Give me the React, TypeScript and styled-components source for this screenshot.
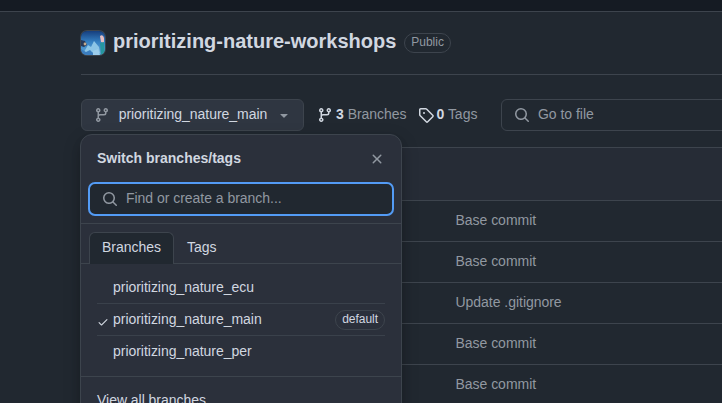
import React from "react";
import styled, { createGlobalStyle } from "styled-components";

const Global = createGlobalStyle`
  *, *::before, *::after { box-sizing: border-box; }
  body { margin: 0; background: #212830; overflow: hidden; }
  button, input { font: inherit; letter-spacing: inherit; }
`;

const paths = {
  branch:
    "M9.5 3.25a2.25 2.25 0 1 1 3 2.122V6A2.5 2.5 0 0 1 10 8.5H6a1 1 0 0 0-1 1v1.128a2.251 2.251 0 1 1-1.5 0V5.372a2.25 2.25 0 1 1 1.5 0v1.836A2.493 2.493 0 0 1 6 7h4a1 1 0 0 0 1-1v-.628A2.25 2.25 0 0 1 9.5 3.25Zm-6 0a.75.75 0 1 0 1.5 0 .75.75 0 0 0-1.5 0Zm8.25-.75a.75.75 0 1 0 0 1.5.75.75 0 0 0 0-1.5ZM4.25 12a.75.75 0 1 0 0 1.5.75.75 0 0 0 0-1.5Z",
  search:
    "M10.68 11.74a6 6 0 0 1-7.922-8.982 6 6 0 0 1 8.982 7.922l3.04 3.04a.749.749 0 0 1-.326 1.275.749.749 0 0 1-.734-.215ZM11.5 7a4.499 4.499 0 1 0-8.997 0A4.499 4.499 0 0 0 11.5 7Z",
  tag: "M1 7.775V2.75C1 1.784 1.784 1 2.75 1h5.025c.464 0 .91.184 1.238.513l6.25 6.25a1.75 1.75 0 0 1 0 2.474l-5.026 5.026a1.75 1.75 0 0 1-2.474 0l-6.25-6.25A1.752 1.752 0 0 1 1 7.775Zm1.5 0c0 .066.026.13.073.177l6.25 6.25a.25.25 0 0 0 .354 0l5.025-5.025a.25.25 0 0 0 0-.354l-6.25-6.25a.25.25 0 0 0-.177-.073H2.75a.25.25 0 0 0-.25.25ZM6 5a1 1 0 1 1 0 2 1 1 0 0 1 0-2Z",
  close:
    "M3.72 3.72a.75.75 0 0 1 1.06 0L8 6.94l3.22-3.22a.749.749 0 0 1 1.275.326.749.749 0 0 1-.215.734L9.06 8l3.22 3.22a.749.749 0 0 1-.326 1.275.749.749 0 0 1-.734-.215L8 9.06l-3.22 3.22a.751.751 0 0 1-1.042-.018.751.751 0 0 1-.018-1.042L6.94 8 3.72 4.78a.75.75 0 0 1 0-1.06Z",
  check:
    "M13.78 4.22a.75.75 0 0 1 0 1.06l-7.25 7.25a.75.75 0 0 1-1.06 0L2.22 9.28a.751.751 0 0 1 .018-1.042.751.751 0 0 1 1.042-.018L6 10.94l6.72-6.72a.75.75 0 0 1 1.06 0Z",
  caret:
    "m4.427 7.427 3.396 3.396a.25.25 0 0 0 .354 0l3.396-3.396A.25.25 0 0 0 11.396 7H4.604a.25.25 0 0 0-.177.427Z",
};

const Glyph = styled.svg<{ $size: number; $color: string }>`
  display: block;
  flex: none;
  width: ${(p) => p.$size}px;
  height: ${(p) => p.$size}px;
  fill: ${(p) => p.$color};
`;

function Icon({ name, size = 16, color = "#9198a1" }: { name: keyof typeof paths; size?: number; color?: string }) {
  return (
    <Glyph viewBox="0 0 16 16" $size={size} $color={color} aria-hidden>
      <path d={paths[name]} />
    </Glyph>
  );
}

const Page = styled.div`
  width: 722px;
  height: 403px;
  overflow: hidden;
  background: #212830;
  color: #d1d7e0;
  font: 14px/21px "Liberation Sans", Arial, sans-serif;
  letter-spacing: -0.03px;
`;

const TopBar = styled.header`
  height: 12px;
  background: #151b23;
  border-bottom: 1px solid #3d444d;
`;

const Main = styled.main`
  margin-left: 81px;
`;

const TitleRow = styled.div`
  display: flex;
  align-items: center;
  height: 63px;
  padding-bottom: 1px;
  border-bottom: 1px solid #3d444d;
`;

const Avatar = styled.svg`
  display: block;
  width: 24px;
  height: 24px;
  border-radius: 6px;
  box-shadow: 0 0 0 1px #3d444d;
`;

const RepoName = styled.h1`
  margin: 0 8px;
  padding-bottom: 4px;
  font-size: 20px;
  line-height: 30px;
  font-weight: 700;
  letter-spacing: 0;
`;

const Pill = styled.span<{ $muted?: boolean }>`
  height: 20px;
  padding: 0 6px;
  border: 1px solid #3d444d;
  border-radius: 10px;
  font-size: 12px;
  line-height: 17px;
  color: ${(p) => (p.$muted ? "#9198a1" : "#d1d7e0")};
`;

const Toolbar = styled.div`
  display: flex;
  align-items: center;
  margin-top: 24px;
  height: 32px;
`;

const Picker = styled.div`
  position: relative;
`;

const Label = styled.span`
  padding-bottom: 2px;
  white-space: nowrap;
`;

const BranchButton = styled.button`
  display: flex;
  align-items: center;
  justify-content: space-between;
  width: 223px;
  height: 32px;
  padding: 0 11px 0 12px;
  border: 1px solid #3d444d;
  border-radius: 6px;
  background: #2f3641;
  color: #d1d7e0;
`;

const CountLink = styled.div<{ $gap: number }>`
  display: flex;
  align-items: center;
  gap: 3px;
  margin-left: ${(p) => p.$gap}px;
  color: #9198a1;
  strong { color: #d1d7e0; }
`;

const FileSearch = styled.div`
  display: flex;
  align-items: center;
  gap: 8px;
  width: 320px;
  flex: none;
  height: 32px;
  margin-left: auto;
  margin-right: -99px;
  padding-left: 12px;
  border: 1px solid #3d444d;
  border-radius: 6px;
  color: #9198a1;
`;

const Files = styled.div`
  margin-top: 16px;
  border: 1px solid #3d444d;
  border-right: 0;
  border-radius: 6px 0 0 0;
`;

const CommitBar = styled.div`
  height: 52px;
  background: #262c36;
`;

const FileRow = styled.div`
  height: 41px;
  padding: 9px 0 0 373.5px;
  border-top: 1px solid #3d444d;
  color: #9198a1;
`;

const Menu = styled.section`
  position: absolute;
  top: 35px;
  left: -1px;
  z-index: 1;
  width: 322px;
  height: 300px;
  border: 1px solid #3d444d;
  border-radius: 12px;
  background: #2b303b;
  box-shadow: 0 6px 12px -3px #01040933, 0 6px 18px 0 #01040933;
`;

const MenuHead = styled.div`
  display: flex;
  align-items: center;
  justify-content: space-between;
  height: 47px;
  padding: 0 16px;
  font-weight: 700;
  letter-spacing: 0;
`;

const BranchField = styled.label`
  display: flex;
  align-items: center;
  gap: 8px;
  height: 34px;
  margin: 0 7px;
  padding-left: 12px;
  border: 2px solid #539bf5;
  border-radius: 7px;
  background: #212830;
`;

const BranchInput = styled.input`
  width: 250px;
  padding: 0 0 2px;
  border: 0;
  outline: 0;
  background: none;
  color: #d1d7e0;
  &::placeholder { color: #9198a1; opacity: 1; }
`;

const Tabs = styled.div`
  display: flex;
  height: 41px;
  margin-top: 7px;
  padding: 8px 8px 0;
  border-top: 1px solid #3d444d;
  box-shadow: inset 0 -1px #3d444d;
`;

const Tab = styled.div<{ $active?: boolean }>`
  height: 32px;
  padding: 4px 12px 0;
  border: 1px solid ${(p) => (p.$active ? "#3d444d" : "transparent")};
  border-bottom: 0;
  border-radius: 6px 6px 0 0;
  background: ${(p) => (p.$active ? "#212830" : "transparent")};
`;

const BranchList = styled.div`
  height: 112px;
  padding: 8px 16px 0;
`;

const BranchRow = styled.div`
  display: grid;
  grid-template-columns: 16px 1fr auto;
  align-items: center;
  height: 32px;
  border-bottom: 1px solid #3a414b;
  &:last-child { border-bottom-color: transparent; }
`;

const CheckSlot = styled.span`
  padding: 4px 0 0;
`;

const MenuFoot = styled.div`
  padding: 13px 16px;
  border-top: 1px solid #3d444d;
`;

const branches = ["prioritizing_nature_ecu", "prioritizing_nature_main", "prioritizing_nature_per"];
const commits = ["Base commit", "Base commit", "Update .gitignore", "Base commit", "Base commit"];

function OwnerAvatar() {
  return (
    <Avatar viewBox="0 0 24 24">
      <defs>
        <linearGradient id="sky" x1="0" y1="0" x2="0" y2="1">
          <stop offset="0" stopColor="#163e7d" />
          <stop offset="0.45" stopColor="#347fc1" />
          <stop offset="1" stopColor="#62a7d7" />
        </linearGradient>
        <filter id="soften">
          <feGaussianBlur stdDeviation="0.6" />
        </filter>
      </defs>
      <rect width="24" height="24" fill="url(#sky)" />
      <g filter="url(#soften)">
        <path d="M3 21L7 14l3 2 3-6 5 6 1 6Z" fill="#8cc5e6" />
        <path d="M0 18l5 3 4-2 5 5H0Z" fill="#3a7dbe" />
        <path d="M12 20l5-2 2 6h-7Z" fill="#9ccdec" />
        <path d="M0 9l4 1 2 4-3 2-3-1Z" fill="#263858" />
        <circle cx="4" cy="13" r="1.4" fill="#c4a98c" />
        <path d="M19 5q3-2 4 2l0 5-3-1Z" fill="#e5bdc0" />
        <path d="M19 12l4-1 1 13h-4Z" fill="#27969e" />
      </g>
    </Avatar>
  );
}

export default function App() {
  return (
    <Page>
      <Global />
      <TopBar />
      <Main>
        <TitleRow>
          <OwnerAvatar />
          <RepoName>prioritizing-nature-workshops</RepoName>
          <Pill $muted>Public</Pill>
        </TitleRow>
        <Toolbar>
          <Picker>
            <BranchButton>
              <Icon name="branch" />
              <Label>prioritizing_nature_main</Label>
              <Icon name="caret" />
            </BranchButton>
            <Menu>
              <MenuHead>
                Switch branches/tags
                <Icon name="close" />
              </MenuHead>
              <BranchField>
                <Icon name="search" />
                <BranchInput placeholder="Find or create a branch..." />
              </BranchField>
              <Tabs>
                <Tab $active>Branches</Tab>
                <Tab>Tags</Tab>
              </Tabs>
              <BranchList>
                {branches.map((name, i) => (
                  <BranchRow key={name}>
                    <CheckSlot>{i === 1 && <Icon name="check" size={12} color="#d1d7e0" />}</CheckSlot>
                    <span>{name}</span>
                    {i === 1 && <Pill>default</Pill>}
                  </BranchRow>
                ))}
              </BranchList>
              <MenuFoot>View all branches</MenuFoot>
            </Menu>
          </Picker>
          <CountLink $gap={13}>
            <Icon name="branch" color="#d1d7e0" />
            <Label><strong>3</strong> Branches</Label>
          </CountLink>
          <CountLink $gap={11}>
            <Icon name="tag" color="#d1d7e0" />
            <Label><strong>0</strong> Tags</Label>
          </CountLink>
          <FileSearch>
            <Icon name="search" />
            <Label>Go to file</Label>
          </FileSearch>
        </Toolbar>
        <Files>
          <CommitBar />
          {commits.map((message, i) => (
            <FileRow key={i}>{message}</FileRow>
          ))}
        </Files>
      </Main>
    </Page>
  );
}
